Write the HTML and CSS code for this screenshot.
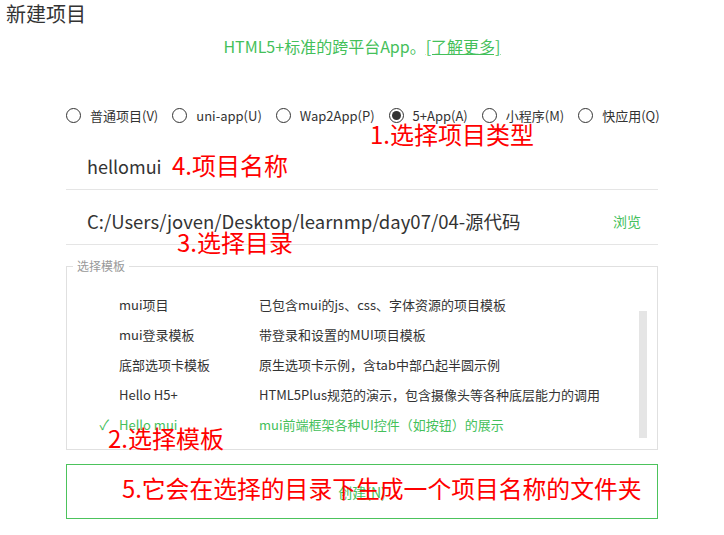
FILE: index.html
```html
<!DOCTYPE html>
<html lang="zh">
<head>
<meta charset="utf-8">
<title>新建项目</title>
<link rel="stylesheet" href="styles.css">
</head>
<body>
<div class="page">
  <h1 class="title">新建项目</h1>
  <p class="intro">HTML5+标准的跨平台App。<a class="more" href="#">[了解更多]</a></p>

  <div class="types">
    <label class="type"><span class="radio"></span>普通项目(V)</label>
    <label class="type"><span class="radio"></span>uni-app(U)</label>
    <label class="type"><span class="radio"></span>Wap2App(P)</label>
    <label class="type"><span class="radio checked"></span>5+App(A)</label>
    <label class="type"><span class="radio"></span>小程序(M)</label>
    <label class="type"><span class="radio"></span>快应用(Q)</label>
  </div>

  <div class="field name-field"><span class="value">hellomui</span></div>
  <div class="field path-field"><span class="value">C:/Users/joven/Desktop/learnmp/day07/04-源代码</span><span class="browse">浏览</span></div>

  <div class="templates">
    <span class="legend">选择模板</span>
    <div class="list">
      <div class="row"><span class="check"></span><span class="tname">mui项目</span><span class="tdesc">已包含mui的js、css、字体资源的项目模板</span></div>
      <div class="row"><span class="check"></span><span class="tname">mui登录模板</span><span class="tdesc">带登录和设置的MUI项目模板</span></div>
      <div class="row"><span class="check"></span><span class="tname">底部选项卡模板</span><span class="tdesc">原生选项卡示例，含tab中部凸起半圆示例</span></div>
      <div class="row"><span class="check"></span><span class="tname">Hello H5+</span><span class="tdesc">HTML5Plus规范的演示，包含摄像头等各种底层能力的调用</span></div>
      <div class="row selected"><span class="check">✓</span><span class="tname">Hello mui</span><span class="tdesc">mui前端框架各种UI控件（如按钮）的展示</span></div>
    </div>
    <div class="scrollbar"></div>
  </div>

  <div class="create">创建(N)</div>

  <span class="note note1">1.选择项目类型</span>
  <span class="note note4">4.项目名称</span>
  <span class="note note3">3.选择目录</span>
  <span class="note note2">2.选择模板</span>
  <span class="note note5">5.它会在选择的目录下生成一个项目名称的文件夹</span>
</div>
</body>
</html>
```

FILE: styles.css
```css
* { box-sizing: border-box; }
html, body { margin: 0; padding: 0; background: #fff; }
body {
  font-family: "Noto Sans CJK SC", "Noto Sans", sans-serif;
  color: #333;
}
.page {
  position: relative;
  width: 724px;
  height: 535px;
  overflow: hidden;
}
.title {
  margin: 0;
  padding: 2px 0 0 6px;
  font-size: 20px;
  line-height: 24px;
  font-weight: normal;
  color: #333;
}
.intro {
  margin: 10px 0 0;
  text-align: center;
  font-size: 16px;
  line-height: 20px;
  color: #44c05a;
}
.more { color: #44c05a; text-decoration: underline; }

.types {
  display: flex;
  gap: 14px;
  margin: 49px 0 0 66px;
  height: 20px;
  align-items: center;
  font-size: 13px;
  color: #333;
}
.type { display: flex; align-items: center; gap: 9px; white-space: nowrap; }
.radio {
  width: 15px; height: 15px;
  border: 1.5px solid #333;
  border-radius: 50%;
  display: inline-flex;
  align-items: center;
  justify-content: center;
}
.radio.checked::after {
  content: "";
  width: 9px; height: 9px;
  border-radius: 50%;
  background: #333;
}

.field {
  margin: 0 66px;
  display: flex;
  justify-content: space-between;
  border-bottom: 1px solid #e5e5e5;
  line-height: 46px;
  font-size: 18px;
  color: #333;
  padding-left: 21px;
}
.name-field { margin-top: 18px; }
.path-field { padding-top: 8px; font-size: 18.5px; }
.browse { font-size: 14px; color: #44c05a; padding-right: 17px; }

.templates {
  position: relative;
  margin: 21px 66px 0;
  height: 184px;
  border: 1px solid #e0e0e0;
  display: flex;
  padding: 22px 10px 10px 0;
}
.legend {
  position: absolute;
  left: 6px;
  top: -9px;
  padding: 0 4px;
  background: #fff;
  font-size: 12px;
  line-height: 16px;
  color: #999;
}
.list { flex: 1; }
.row {
  display: flex;
  height: 30px;
  align-items: center;
  font-size: 13px;
  color: #333;
}
.check { width: 52px; text-align: right; padding-right: 10px; color: #44c05a; font-size: 14px; }
.tname { width: 140px; }
.row.selected { color: #44c05a; }
.scrollbar {
  width: 8px;
  background: #e5e5e5;
  margin-top: 22px;
  height: 127px;
}

.create {
  margin: 14px 66px 0;
  height: 55px;
  border: 1px solid #4cc35c;
  display: flex;
  align-items: center;
  justify-content: center;
  font-size: 14px;
  color: #44c05a;
}

.note {
  position: absolute;
  font-size: 24px;
  line-height: 30px;
  color: #ff0000;
  white-space: nowrap;
}
.note1 { left: 370px; top: 119px; }
.note4 { left: 172px; top: 150px; }
.note3 { left: 177px; top: 227px; }
.note2 { left: 108px; top: 423px; }
.note5 { left: 122px; top: 473px; font-size: 23.8px; }
```
